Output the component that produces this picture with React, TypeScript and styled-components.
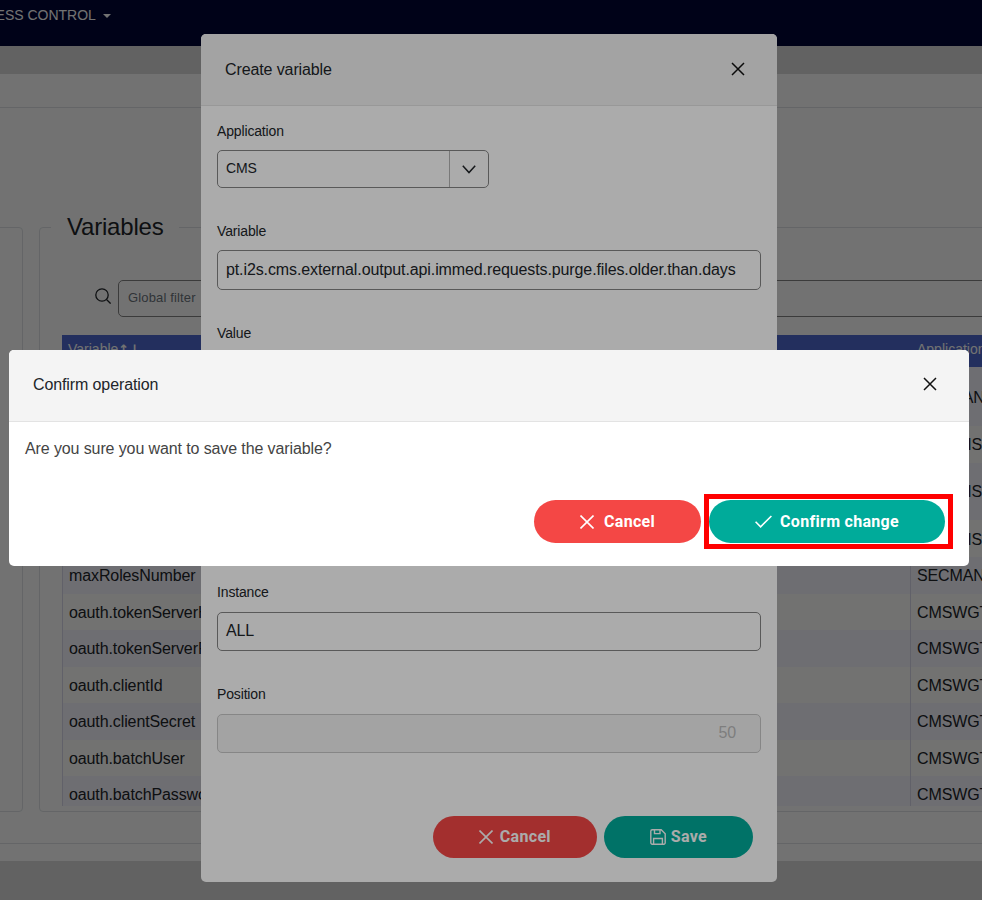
import React from "react";
import styled, { createGlobalStyle } from "styled-components";

const Global = createGlobalStyle`
  html, body { margin: 0; padding: 0; background: #fff; }
  body { font-family: "Liberation Sans", Arial, sans-serif; color: #212529; letter-spacing: -0.11px; }
  * { box-sizing: border-box; }
`;

const Page = styled.div`
  position: relative;
  width: 982px;
  height: 900px;
  overflow: hidden;
  display: flex;
  flex-direction: column;
  background: #dcdcdc;
`;

const NavBar = styled.nav`
  height: 46px;
  flex: none;
  background: #000738;
  display: flex;
  align-items: flex-start;
  padding-top: 7px;
  margin-left: -34px;
`;

const NavItem = styled.span`
  font-size: 14px;
  line-height: 16px;
  color: #fff;
  white-space: nowrap;
  display: flex;
  align-items: center;
  gap: 7px;
  letter-spacing: 0;
`;

const Caret = styled.span`
  width: 0;
  height: 0;
  margin-top: 2px;
  border-left: 4px solid transparent;
  border-right: 4px solid transparent;
  border-top: 4px solid #fff;
`;

const SubBar = styled.div`
  height: 28px;
  flex: none;
  background: #dcdcdc;
`;

const Main = styled.main`
  height: 787px;
  flex: none;
  background: #fff;
  display: flex;
  flex-direction: column;
`;

const Crumbs = styled.div`
  height: 34px;
  flex: none;
  border-bottom: 1px solid #dee2e6;
`;

const Panels = styled.div`
  flex: 1;
  min-height: 0;
  display: flex;
  gap: 16px;
  padding: 105px 0 31px;
  margin-left: -20px;
`;

const BottomStrip = styled.div`
  height: 18px;
  flex: none;
  border-top: 1px solid #dee2e6;
`;

const SidePanel = styled.div`
  width: 43px;
  flex: none;
  margin-top: 14px;
  border: 1px solid #dee2e6;
  border-radius: 4px;
`;

const VarPanel = styled.fieldset`
  width: 1000px;
  flex: none;
  margin: 0;
  padding: 0 0 5px 22px;
  min-width: 0;
  border: 1px solid #dee2e6;
  border-radius: 4px;
  display: flex;
  flex-direction: column;
`;

const PanelTitle = styled.legend`
  margin-left: -11px;
  padding: 0 16px;
  font-size: 24px;
  line-height: 28px;
  letter-spacing: -0.2px;
  color: #212529;
`;

const FilterRow = styled.div`
  display: flex;
  align-items: center;
  gap: 7px;
  margin: 39px 0 18px 33px;
  flex: none;
  color: #212529;
`;

const SearchGlyph = styled.svg`
  flex: none;
  margin-bottom: 6px;
`;

const FilterInput = styled.div`
  width: 900px;
  height: 37px;
  border: 1px solid #858585;
  border-radius: 5px;
  background: #fff;
  font-size: 13px;
  line-height: 33px;
  letter-spacing: 0.15px;
  padding-left: 9px;
  color: #6c757d;
`;

const Table = styled.div`
  flex: 1;
  min-height: 0;
  overflow: hidden;
  font-size: 16px;
`;

const HeadRow = styled.div`
  height: 32px;
  display: flex;
  background: #506bd1;
  color: #fff;
  font-size: 14px;
`;

const HeadCell = styled.div<{ $w: number }>`
  width: ${(p) => p.$w}px;
  flex: none;
  padding: 5px 6px 0 6px;
  line-height: 18px;
  white-space: nowrap;
  letter-spacing: 0;
  & + & {
    padding-left: 7px;
  }
`;

const SortArrows = styled.span`
  font-family: "DejaVu Sans", sans-serif;
  font-size: 13px;
  font-weight: 700;
`;

const Row = styled.div<{ $h: number; $odd: boolean }>`
  height: ${(p) => p.$h}px;
  display: flex;
  background: ${(p) => (p.$odd ? "#f7f5ff" : "#fefefc")};
`;

const Cell = styled.div<{ $w: number }>`
  width: ${(p) => p.$w}px;
  flex: none;
  overflow: hidden;
  white-space: nowrap;
  padding: 2px 6px 0;
  display: flex;
  align-items: center;
  border-left: 1px solid #d8d8ea;
`;

const Backdrop = styled.div`
  position: absolute;
  inset: 0;
  background: rgba(0, 0, 0, 0.33);
`;

const Dialog = styled.div<{ $x: number; $y: number; $w: number; $h: number }>`
  position: absolute;
  left: ${(p) => p.$x}px;
  top: ${(p) => p.$y}px;
  width: ${(p) => p.$w}px;
  height: ${(p) => p.$h}px;
  background: #fff;
  border-radius: 5px;
  overflow: hidden;
  display: flex;
  flex-direction: column;
`;

const DialogHeader = styled.header<{ $pb: number }>`
  height: 72px;
  flex: none;
  background: #f4f4f4;
  border-bottom: 1px solid #e3e3e3;
  display: flex;
  align-items: center;
  justify-content: space-between;
  padding: 0 32px ${(p) => p.$pb}px 24px;
  font-size: 16px;
  color: #212529;
`;

const CloseGlyph = styled.svg`
  flex: none;
  margin-bottom: 2px;
`;

const FormBody = styled.div`
  flex: 1;
  min-height: 0;
  padding: 15px 16px 0;
  display: flex;
  flex-direction: column;
  gap: 33px;
`;

const Field = styled.div<{ $gap: number }>`
  display: flex;
  flex-direction: column;
  gap: ${(p) => p.$gap}px;
`;

const Label = styled.label`
  font-size: 14px;
  line-height: 21px;
  letter-spacing: -0.15px;
  color: #212529;
`;

const Select = styled.div`
  width: 272px;
  height: 38px;
  border: 1px solid #858585;
  border-radius: 5px;
  display: flex;
  align-items: center;
  font-size: 14px;
  padding-left: 8px;
`;

const SelectValue = styled.span`
  flex: 1;
  padding-bottom: 2px;
`;

const SelectToggle = styled.span`
  width: 39px;
  height: 100%;
  border-left: 1px solid #b5b5b5;
  display: flex;
  align-items: center;
  justify-content: center;
  color: #212529;
`;

const Input = styled.div<{ $h: number; $lh: number; $disabled?: boolean }>`
  height: ${(p) => p.$h}px;
  border: 1px solid ${(p) => (p.$disabled ? "#c8c8c8" : "#858585")};
  border-radius: 5px;
  background: ${(p) => (p.$disabled ? "#f4f4f4" : "transparent")};
  color: ${(p) => (p.$disabled ? "#bcbcbc" : "#212529")};
  text-align: ${(p) => (p.$disabled ? "right" : "left")};
  font-size: 16px;
  line-height: ${(p) => p.$lh}px;
  padding: 0 24px 0 8px;
  white-space: nowrap;
`;

const Footer = styled.footer<{ $gap: number; $pad: string }>`
  flex: none;
  display: flex;
  justify-content: flex-end;
  gap: ${(p) => p.$gap}px;
  padding: ${(p) => p.$pad};
`;

const ActionButton = styled.button<{ $kind: "danger" | "ok"; $h: number; $gap: number }>`
  height: ${(p) => p.$h}px;
  padding: 0 46px;
  border: 0;
  border-radius: 22px;
  background: ${(p) => (p.$kind === "danger" ? "#f44745" : "#00ab9a")};
  color: #fff;
  font: 700 16px/1 Roboto, "Liberation Sans", sans-serif;
  letter-spacing: 0.3px;
  display: inline-flex;
  align-items: center;
  gap: ${(p) => p.$gap}px;
`;

const ConfirmBody = styled.div`
  flex: 1;
  padding: 18px 16px 0;
  font-size: 16px;
  line-height: 18px;
  color: #444;
`;

const Highlight = styled.div`
  position: absolute;
  left: 695px;
  top: 144px;
  width: 249px;
  height: 55px;
  border: 5px solid #ff0000;
  pointer-events: none;
`;

const CloseIcon = () => (
  <CloseGlyph width="14" height="14" viewBox="0 0 14 14" fill="none" stroke="#111" strokeWidth="1.5">
    <path d="M1 1l12 12M13 1L1 13" />
  </CloseGlyph>
);
const TimesIcon = () => (
  <svg width="14" height="14" viewBox="0 0 14 14" fill="none" stroke="#fff" strokeWidth="1.6">
    <path d="M.5.5l13 13M13.5.5l-13 13" />
  </svg>
);
const CheckIcon = () => (
  <svg width="17" height="13" viewBox="0 0 17 13" fill="none" stroke="#fff" strokeWidth="1.6">
    <path d="M.6 6.8l5 5L16.4 1" />
  </svg>
);
const SaveIcon = () => (
  <svg width="16" height="16" viewBox="0 0 16 16" fill="none" stroke="#fff" strokeWidth="1.4">
    <path d="M2.2.8h9l4 4v9a1.4 1.4 0 0 1-1.4 1.4H2.2A1.4 1.4 0 0 1 .8 13.8V2.2A1.4 1.4 0 0 1 2.2.8z" />
    <path d="M3.6 15V9.5h8.8V15M4.5.8v3.8h5.5V.8" />
  </svg>
);
const ChevronIcon = () => (
  <svg width="14" height="9" viewBox="0 0 14 9" fill="none" stroke="#212529" strokeWidth="1.5">
    <path d="M.8.8L7 7.6 13.2.8" />
  </svg>
);
const SearchIcon = () => (
  <SearchGlyph width="16" height="16" viewBox="0 0 16 16" fill="none" stroke="#212529" strokeWidth="1.3">
    <circle cx="7" cy="7" r="6.2" />
    <path d="M11.5 11.5L15.6 15.6" />
  </SearchGlyph>
);

const COL1 = 848;
const COL2 = 152;

const rows = [
  { name: "", app: "SECMAN", h: 59 },
  { name: "", app: "CMSWIS", h: 36.5 },
  { name: "", app: "CMSWIS", h: 57.5 },
  { name: "", app: "CMSWIS", h: 37 },
  { name: "maxRolesNumber", app: "SECMAN", h: 36.5 },
  { name: "oauth.tokenServerHost", app: "CMSWGT", h: 36.5 },
  { name: "oauth.tokenServerPort", app: "CMSWGT", h: 36.5 },
  { name: "oauth.clientId", app: "CMSWGT", h: 36.5 },
  { name: "oauth.clientSecret", app: "CMSWGT", h: 36.5 },
  { name: "oauth.batchUser", app: "CMSWGT", h: 36.5 },
  { name: "oauth.batchPassword", app: "CMSWGT", h: 36.5 },
];

export default function App() {
  return (
    <Page>
      <Global />
      <NavBar>
        <NavItem>
          ACCESS CONTROL
          <Caret />
        </NavItem>
      </NavBar>
      <SubBar />
      <Main>
        <Crumbs />
        <Panels>
          <SidePanel />
          <VarPanel>
            <PanelTitle>Variables</PanelTitle>
            <FilterRow>
              <SearchIcon />
              <FilterInput>Global filter</FilterInput>
            </FilterRow>
            <Table>
              <HeadRow>
                <HeadCell $w={COL1}>
                  Variable<SortArrows>↑↓</SortArrows>
                </HeadCell>
                <HeadCell $w={COL2}>Application</HeadCell>
              </HeadRow>
              {rows.map((r, i) => (
                <Row key={i} $h={r.h} $odd={i % 2 === 0}>
                  <Cell $w={COL1}>{r.name}</Cell>
                  <Cell $w={COL2}>{r.app}</Cell>
                </Row>
              ))}
            </Table>
          </VarPanel>
        </Panels>
        <BottomStrip />
      </Main>

      <Backdrop />
      <Dialog $x={201} $y={34} $w={576} $h={848}>
        <DialogHeader $pb={0}>
          Create variable
          <CloseIcon />
        </DialogHeader>
        <FormBody>
          <Field $gap={8}>
            <Label>Application</Label>
            <Select>
              <SelectValue>CMS</SelectValue>
              <SelectToggle>
                <ChevronIcon />
              </SelectToggle>
            </Select>
          </Field>
          <Field $gap={8}>
            <Label>Variable</Label>
            <Input $h={40} $lh={38}>
              pt.i2s.cms.external.output.api.immed.requests.purge.files.older.than.days
            </Input>
          </Field>
          <Field $gap={8}>
            <Label>Value</Label>
            <Input $h={197} $lh={38} />
          </Field>
          <Field $gap={9}>
            <Label>Instance</Label>
            <Input $h={39} $lh={35}>
              ALL
            </Input>
          </Field>
          <Field $gap={9}>
            <Label>Position</Label>
            <Input $h={39} $lh={35} $disabled>
              50
            </Input>
          </Field>
        </FormBody>
        <Footer $gap={7} $pad="0 24px 24px 0">
          <ActionButton $kind="danger" $h={42} $gap={7}>
            <TimesIcon />
            Cancel
          </ActionButton>
          <ActionButton $kind="ok" $h={42} $gap={5}>
            <SaveIcon />
            Save
          </ActionButton>
        </Footer>
      </Dialog>

      <Backdrop />
      <Dialog $x={9} $y={350} $w={960} $h={216}>
        <DialogHeader $pb={2}>
          Confirm operation
          <CloseIcon />
        </DialogHeader>
        <ConfirmBody>Are you sure you want to save the variable?</ConfirmBody>
        <Footer $gap={8} $pad="0 24px 23px 0">
          <ActionButton $kind="danger" $h={43} $gap={10}>
            <TimesIcon />
            Cancel
          </ActionButton>
          <ActionButton $kind="ok" $h={43} $gap={8}>
            <CheckIcon />
            Confirm change
          </ActionButton>
        </Footer>
        <Highlight />
      </Dialog>
    </Page>
  );
}
